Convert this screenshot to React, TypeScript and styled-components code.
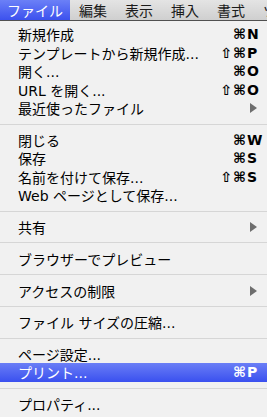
import React from "react"
import styled, { createGlobalStyle } from "styled-components"

const GlobalStyle = createGlobalStyle`
	html, body {
		margin: 0;
		padding: 0;
		background: #f1f1f1;
	}
	body {
		width: 267px;
		height: 417px;
		overflow: hidden;
		font-family: "DejaVu Sans", "Noto Sans CJK JP", sans-serif;
		-webkit-font-smoothing: antialiased;
	}
`

type Entry =
	| { kind: "item"; label: string; mods?: string; keyName?: string; submenu?: boolean; active?: boolean }
	| { kind: "sep" }

const tabs = ["ファイル", "編集", "表示", "挿入", "書式", "ツール"]

const entries: Entry[] = [
	{ kind: "item", label: "新規作成", mods: "⌘", keyName: "N" },
	{ kind: "item", label: "テンプレートから新規作成...", mods: "⇧⌘", keyName: "P" },
	{ kind: "item", label: "開く...", mods: "⌘", keyName: "O" },
	{ kind: "item", label: "URL を開く...", mods: "⇧⌘", keyName: "O" },
	{ kind: "item", label: "最近使ったファイル", submenu: true },
	{ kind: "sep" },
	{ kind: "item", label: "閉じる", mods: "⌘", keyName: "W" },
	{ kind: "item", label: "保存", mods: "⌘", keyName: "S" },
	{ kind: "item", label: "名前を付けて保存...", mods: "⇧⌘", keyName: "S" },
	{ kind: "item", label: "Web ページとして保存..." },
	{ kind: "sep" },
	{ kind: "item", label: "共有", submenu: true },
	{ kind: "sep" },
	{ kind: "item", label: "ブラウザーでプレビュー" },
	{ kind: "sep" },
	{ kind: "item", label: "アクセスの制限", submenu: true },
	{ kind: "sep" },
	{ kind: "item", label: "ファイル サイズの圧縮..." },
	{ kind: "sep" },
	{ kind: "item", label: "ページ設定..." },
	{ kind: "item", label: "プリント...", mods: "⌘", keyName: "P", active: true },
	{ kind: "sep" },
	{ kind: "item", label: "プロパティ..." },
]

export default function App() {
	return (
		<>
			<GlobalStyle />
			<MenuBar>
				{tabs.map((t, i) => (
					<Tab key={t} $active={i === 0}>
						{t}
					</Tab>
				))}
			</MenuBar>
			<Menu>
				{entries.map((e, i) =>
					e.kind === "sep" ? (
						<Separator key={i} />
					) : (
						<Item key={i} $active={!!e.active}>
							<Label>{e.label}</Label>
							{e.keyName && (
								<Shortcut>
									<Mods>{e.mods}</Mods>
									<KeyName>{e.keyName}</KeyName>
								</Shortcut>
							)}
							{e.submenu && <Arrow $active={!!e.active} />}
						</Item>
					)
				)}
			</Menu>
		</>
	)
}

const MenuBar = styled.div`
	height: 20px;
	display: flex;
	align-items: stretch;
	overflow: hidden;
	white-space: nowrap;
	background: linear-gradient(#e4e4e4, #cfcfcf);
	border-bottom: 1px solid #505050;
`

const Tab = styled.div<{ $active: boolean }>`
	display: flex;
	align-items: center;
	padding: ${(p) => (p.$active ? "0 7px" : "0 9px")};
	font-size: 14px;
	color: ${(p) => (p.$active ? "#fff" : "#1a1a1a")};
	background: ${(p) => (p.$active ? "linear-gradient(#6b80f7, #3c51ee)" : "transparent")};
	flex-shrink: 0;
`

const Menu = styled.div`
	padding-top: 4px;
	background: #f1f1f1;
`

const Item = styled.div<{ $active: boolean }>`
	height: 18.5px;
	display: flex;
	align-items: center;
	padding: 0 9px 0 18px;
	font-size: 14px;
	color: ${(p) => (p.$active ? "#fff" : "#000")};
	background: ${(p) => (p.$active ? "linear-gradient(#6a7ef6, #3a50ef)" : "transparent")};
	white-space: nowrap;
`

const Label = styled.span`
	flex: 1;
`

const Shortcut = styled.span`
	display: flex;
	align-items: center;
	font-size: 14px;
	font-weight: bold;
`

const Mods = styled.span`
	text-align: right;
	letter-spacing: 1px;
`

const KeyName = styled.span`
	width: 11px;
`

const Arrow = styled.span<{ $active: boolean }>`
	width: 0;
	height: 0;
	margin-right: 1px;
	border-top: 5px solid transparent;
	border-bottom: 5px solid transparent;
	border-left: 7px solid ${(p) => (p.$active ? "#fff" : "#6e6e6e")};
`

const Separator = styled.div`
	height: 13.2px;
	display: flex;
	align-items: center;
	&::after {
		content: "";
		display: block;
		width: 100%;
		height: 1px;
		background: #d6d6d6;
	}
`
